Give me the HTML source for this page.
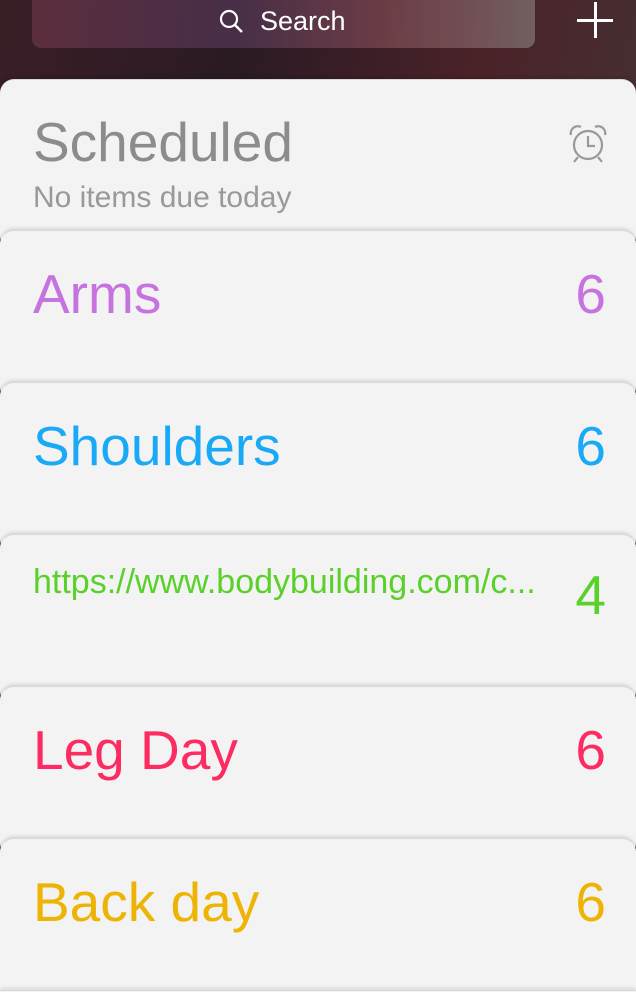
<!DOCTYPE html>
<html style="height:992px;overflow:hidden"><head><style>
body{margin:0;width:636px;height:992px;overflow:hidden;position:relative;font-family:"Liberation Sans",sans-serif;
background:linear-gradient(100deg,#3a1e26 0%,#2a1a24 30%,#4a2228 60%,#433a3a 100%);}
.search{position:absolute;left:32px;top:-10px;width:503px;height:58px;border-radius:9px;
background:linear-gradient(90deg,rgba(120,60,80,.55),rgba(90,60,95,.6) 40%,rgba(140,80,90,.6) 70%,rgba(130,120,120,.7));}
.search span{position:absolute;left:228px;top:16px;color:#fff;font-size:27px;}
.card{position:absolute;left:0;width:636px;height:170px;border-radius:14px;background:#f3f3f3;
border-top:1px solid #d8d8d8;box-shadow:0 -2px 3px rgba(0,0,0,.12);}
.t{position:absolute;left:33px;font-size:55px;white-space:nowrap;}
.n{position:absolute;right:30px;font-size:55px;}
</style></head><body>
<div class="search"><svg style="position:absolute;left:186px;top:18px" width="28" height="28" viewBox="0 0 28 28"><circle cx="11" cy="11" r="8" fill="none" stroke="#fff" stroke-width="2.2"/><line x1="16.5" y1="16.5" x2="24" y2="24" stroke="#fff" stroke-width="2.4"/></svg><span>Search</span></div>
<svg style="position:absolute;left:577px;top:2px" width="37" height="37"><line x1="18.5" y1="0" x2="18.5" y2="36" stroke="#fff" stroke-width="3"/><line x1="0" y1="18.5" x2="36" y2="18.5" stroke="#fff" stroke-width="3"/></svg>

<div class="card" style="top:79px">
<div class="t" style="top:30px;color:#8c8c8c">Scheduled</div>
<div style="position:absolute;left:33px;top:101px;font-size:30px;color:#999">No items due today</div>
<svg style="position:absolute;left:566px;top:43px" width="44" height="42" viewBox="0 0 44 42" fill="none" stroke="#999" stroke-width="2.2"><circle cx="22" cy="22" r="14"/><path d="M22 13v10h7"/><path d="M5 12a7 7 0 0 1 10-8M39 12a7 7 0 0 0-10-8"/><path d="M12 34l-4 5M32 34l4 5"/></svg>
</div>
<div class="card" style="top:230px"><div class="t" style="top:31px;color:#c773df">Arms</div><div class="n" style="top:31px;color:#c773df">6</div></div>
<div class="card" style="top:382px"><div class="t" style="top:31px;color:#1aa9f7">Shoulders</div><div class="n" style="top:31px;color:#1aa9f7">6</div></div>
<div class="card" style="top:534px"><div class="t" style="top:28px;font-size:34px;color:#5ad12a;width:522px;overflow:hidden;text-overflow:ellipsis">https://www.bodybuilding.com/c...</div><div class="n" style="top:28px;color:#5ad12a">4</div></div>
<div class="card" style="top:686px"><div class="t" style="top:31px;color:#fc2b62">Leg Day</div><div class="n" style="top:31px;color:#fc2b62">6</div></div>
<div class="card" style="top:838px"><div class="t" style="top:31px;color:#eeb405">Back day</div><div class="n" style="top:31px;color:#eeb405">6</div></div>
<div class="card" style="top:990px;height:2px"></div>
</body></html>
